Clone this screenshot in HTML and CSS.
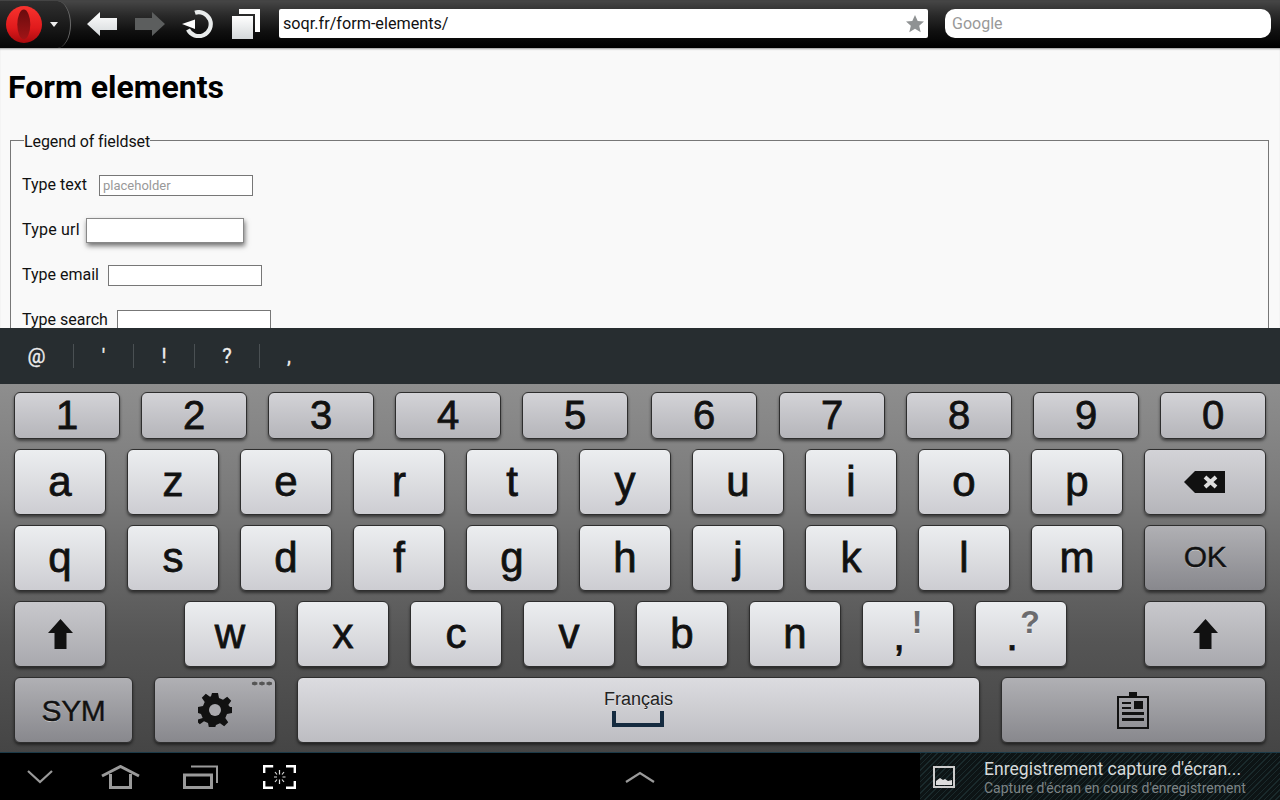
FILE: index.html
```html
<!DOCTYPE html>
<html lang="fr">
<head>
<meta charset="utf-8">
<title>Form elements</title>
<link rel="stylesheet" href="styles.css">
</head>
<body>
<div class="app">
  <header class="toolbar">
    <div class="menu">
      <svg class="opera" viewBox="0 0 36 37"><defs><linearGradient id="og" x1="0" y1="0" x2="0" y2="1"><stop offset="0" stop-color="#f8332e"/><stop offset=".6" stop-color="#e01a1c"/><stop offset="1" stop-color="#a80a0e"/></linearGradient><linearGradient id="oh" x1="0" y1="0" x2="0" y2="1"><stop offset="0" stop-color="#6a0c0e"/><stop offset="1" stop-color="#a01416"/></linearGradient></defs><ellipse cx="18" cy="18.500" rx="18" ry="18.500" fill="url(#og)"/><ellipse cx="17.800" cy="18.500" rx="6.500" ry="15" fill="url(#oh)"/></svg>
      <svg class="caret" viewBox="0 0 8 5"><path d="M0 0h8L4 5z" fill="#eee"/></svg>
    </div>
    <svg class="tool t-back" viewBox="0 0 30 24"><defs><linearGradient id="wg" x1="0" y1="0" x2="0" y2="1"><stop offset="0" stop-color="#fff"/><stop offset="1" stop-color="#d4d8da"/></linearGradient></defs><path d="M0 12 13 0v6h17v12H13v6z" fill="url(#wg)"/></svg>
    <svg class="tool t-fwd" viewBox="0 0 30 24"><path d="M30 12 17 0v6H0v12h17v6z" fill="#5c5e5e"/></svg>
    <svg class="tool t-reload" viewBox="0 0 31 28"><path d="M13 2.700A12 12 0 1 1 6 19.500" fill="none" stroke="#e9ecec" stroke-width="4.200"/><path d="M0 14 13 9.500V19z" fill="#fff"/></svg>
    <svg class="tool t-tabs" viewBox="0 0 28 30"><path d="M7 0h21v23h-5V5H7z" fill="#fff"/><path d="M0 7h21v23H0z" fill="url(#wg)"/></svg>
    <div class="address"><span class="url-text">soqr.fr/form-elements/</span>
      <svg class="star" viewBox="0 0 20 20"><path d="M10 1l2.700 6 6.300.6-4.800 4.200 1.500 6.400L10 14.800 4.300 18.200l1.500-6.400L1 7.600 7.300 7z" fill="#8f9293"/></svg>
    </div>
    <div class="search">Google</div>
  </header>

  <main class="page">
    <h1>Form elements</h1>
    <fieldset>
      <legend>Legend of fieldset</legend>
      <p class="line l-text"><label>Type text</label><input class="field" placeholder="placeholder"></p>
      <p class="line l-url"><label>Type url</label><input class="field focus"></p>
      <p class="line l-email"><label>Type email</label><input class="field"></p>
      <p class="line l-search"><label>Type search</label><input class="field"></p>
    </fieldset>
  </main>

  <div class="suggest">
    <span class="s s1">@</span><span class="s s2">'</span><span class="s s3">!</span><span class="s s4">?</span><span class="s s5">,</span>
  </div>

  <section class="keyboard">
    <div class="row nums">
      <div class="key gray">1</div><div class="key gray">2</div><div class="key gray">3</div><div class="key gray">4</div><div class="key gray">5</div><div class="key gray n6">6</div><div class="key gray n7">7</div><div class="key gray">8</div><div class="key gray">9</div><div class="key gray">0</div>
    </div>
    <div class="row">
      <div class="key">a</div><div class="key">z</div><div class="key">e</div><div class="key">r</div><div class="key">t</div><div class="key">y</div><div class="key">u</div><div class="key">i</div><div class="key">o</div><div class="key">p</div>
      <div class="key wide gray"><svg class="ico-del" viewBox="0 0 41 22"><path d="M0 11 11 0h30v22H11z" fill="#111"/><path d="M21 6l11 10M32 6 21 16" stroke="#ddd" stroke-width="4"/></svg></div>
    </div>
    <div class="row">
      <div class="key">q</div><div class="key">s</div><div class="key">d</div><div class="key">f</div><div class="key">g</div><div class="key">h</div><div class="key">j</div><div class="key">k</div><div class="key">l</div><div class="key">m</div>
      <div class="key wide dark small ok">OK</div>
    </div>
    <div class="row">
      <div class="key gray2"><svg class="ico-shift" viewBox="0 0 25 30"><path d="M12.500 0 25 14h-6.500v16h-12V14H0z" fill="#111"/></svg></div>
      <div class="key k-w">w</div><div class="key">x</div><div class="key">c</div><div class="key">v</div><div class="key">b</div><div class="key">n</div>
      <div class="key pair"><span class="main">,</span><span class="alt">!</span></div>
      <div class="key pair"><span class="main">.</span><span class="alt">?</span></div>
      <div class="key wide gray2 k-rshift"><svg class="ico-shift" viewBox="0 0 25 30"><path d="M12.500 0 25 14h-6.500v16h-12V14H0z" fill="#111"/></svg></div>
    </div>
    <div class="row">
      <div class="key sym dark small">SYM</div>
      <div class="key gear dark"><span class="dots"></span><svg class="ico-gear" viewBox="0 0 34 34"><path d="M14 0h6l1 5 4 1.700 4.200-2.900 4 4-2.900 4.200L32 14l2 0v6l-5 1-1.700 4 2.900 4.200-4 4-4.200-2.900-4 1.700-1 3h-6l-1-5-4-1.700-4.200 2.900-4-4L4.700 25 3 21l-3-1v-6l5-1 1.700-4L3.800 4.800l4-4L12 3.700l1-.4z" fill="#111"/><circle cx="17" cy="17" r="6" fill="#a9a8ad"/></svg></div>
      <div class="key space"><span class="lang">Français</span><span class="bar"></span></div>
      <div class="key clip dark"><svg class="ico-clip" viewBox="0 0 32 37"><path d="M1 5h30v31H1z" fill="none" stroke="#111" stroke-width="2"/><path d="M12 0h8v6h-8zM17 9h9v8h-9zM5 10h9v2H5zM5 15h9v2H5zM5 20h22v3H5zM5 26h22v3H5z" fill="#111"/></svg></div>
    </div>
  </section>

  <footer class="navbar">
    <svg class="nav nav-down" viewBox="0 0 26 14"><path d="M1 1l12 11L25 1" fill="none" stroke="#9a9a9a" stroke-width="2.200"/></svg>
    <svg class="nav nav-home" viewBox="0 0 39 24"><path d="M1 11 19.500 1.500 38 11M9.500 9v13.500h20V9" fill="none" stroke="#9a9a9a" stroke-width="3"/></svg>
    <svg class="nav nav-recent" viewBox="0 0 35 24"><path d="M1.500 10h27v12.500h-27z" fill="none" stroke="#9a9a9a" stroke-width="3"/><path d="M8 1.500h26V18" fill="none" stroke="#9a9a9a" stroke-width="2"/></svg>
    <svg class="nav nav-shot" viewBox="0 0 33 24"><path d="M1.200 8V1.200h9M23 1.200h8.800V8M31.800 16v6.800H23M10 22.800H1.200V16" fill="none" stroke="#fff" stroke-width="2.400"/><path d="M16.500 5v4.500M16.500 14.500V19M11 12h3M19.500 12h3M12 7l2 2.500M21 7l-2 2.500M12 17l2-2.500M21 17l-2-2.500" stroke="#ddd" stroke-width="1.200"/></svg>
    <svg class="nav nav-up" viewBox="0 0 30 12"><path d="M1 11 15 2l14 9" fill="none" stroke="#9a9a9a" stroke-width="2.200"/></svg>
    <div class="notice">
      <svg class="pic" viewBox="0 0 22 22"><path d="M1 1h20v20H1z" fill="none" stroke="#ccc" stroke-width="2"/><path d="M3 19v-4l4-3 3 2 2-1 3 2 4-1v5z" fill="#ddd"/></svg>
      <div class="notice-text">
        <div class="n-title">Enregistrement capture d'écran...</div>
        <div class="n-sub">Capture d'écran en cours d'enregistrement</div>
      </div>
    </div>
  </footer>
</div>
</body>
</html>
```
FILE: styles.css
```css
* { box-sizing: border-box; }
html, body { margin: 0; padding: 0; }
body { width: 1280px; height: 800px; overflow: hidden; background: #000; font-family: "Liberation Sans", Arial, sans-serif; }
.app { width: 1280px; height: 800px; display: flex; flex-direction: column; overflow: hidden; }

/* toolbar */
.toolbar { height: 48px; flex: none; display: flex; align-items: center; background: linear-gradient(#464646 0, #2a2a2a 30%, #101010 65%, #000 100%); border-top: 1px solid #444; }
.menu { width: 71px; height: 47px; flex: none; display: flex; align-items: center; gap: 8px; padding-left: 6px; border-right: 1px solid #6a6a6a; border-radius: 0 14px 14px 0 / 0 24px 24px 0; background: linear-gradient(#303030, #060606); }
.opera { width: 36px; height: 37px; flex: none; }
.caret { width: 8px; height: 5px; flex: none; }
.tool { flex: none; margin-bottom: 2px; }
.t-back { width: 30px; height: 24px; margin-left: 16px; }
.t-fwd { width: 30px; height: 24px; margin-left: 18px; }
.t-reload { width: 31px; height: 28px; margin-left: 17px; }
.t-tabs { width: 28px; height: 30px; margin-left: 19px; }
.address { flex: none; margin: 0 0 2px 19px; width: 649px; height: 29px; background: #fff; border-radius: 2px; display: flex; align-items: center; justify-content: space-between; padding: 0 3px 0 4px; font: 16.200px Roboto, sans-serif; color: #111; }
.star { width: 20px; height: 20px; }
.search { flex: none; margin: 0 0 2px 17px; width: 326px; height: 29px; background: #fff; border-radius: 10px; padding-left: 7px; font: 16px/29px Roboto, sans-serif; color: #999; }

/* page */
.page { height: 280px; flex: none; overflow: hidden; background: #f9f9f9; padding: 0 10px; font-family: Roboto, sans-serif; color: #111; box-shadow: inset 0 2px 2px -1px #999; }
h1 { margin: 21px 0 0 -2px; font-size: 32px; line-height: 36px; font-weight: 700; color: #000; }
fieldset { margin: 23px 1px 0 0; padding: 0 11px; border: 1px solid #777; height: 300px; min-width: 0; }
legend { padding: 4px 0 0; margin-left: 2px; font-size: 16px; line-height: 20px; letter-spacing: -.1px; }
.line { display: flex; align-items: center; margin: 0 0 24px; font-size: 16px; height: 21px; }
.line label { flex: none; padding-bottom: 2px; }
.l-text { margin-top: 23px; }
.l-text label { width: 77px; }
.l-url label { width: 64px; letter-spacing: .2px; }
.l-email label { width: 86px; }
.l-search label { width: 95px; }
.field { width: 154px; height: 21px; border: 1px solid #777; background: #fff; padding: 0 3px; font: 13px Roboto, sans-serif; }
.field::placeholder { color: #999; }
.field.focus { width: 158px; height: 25px; border-color: #888; box-shadow: 1px 3px 5px rgba(0,0,0,.55); }

/* suggestions */
.suggest { height: 56px; flex: none; background: #272d30; display: flex; align-items: center; color: #eee; font: 20px Roboto, sans-serif; -webkit-text-stroke: .3px #eee; }
.s { display: flex; align-items: center; justify-content: center; height: 24px; border-right: 1px solid #4a5053; width: 60px; }
.s1 { width: 74px; }
.s3 { width: 61px; }
.s4 { width: 65px; }
.s5 { border: 0; margin-left: -1px; }

/* keyboard */
.keyboard { height: 369px; flex: none; padding: 8px 14px 0; background: linear-gradient(#8e8e8e 0, #7a7a7a 30%, #555 70%, #454545 100%); display: flex; flex-direction: column; gap: 10px; border-bottom: 1px solid #1c3a48; }
.row { display: flex; gap: 21px; height: 66px; flex: none; }
.key { width: 92px; height: 66px; flex: none; display: flex; align-items: center; justify-content: center; border-radius: 6px; border: 1px solid #2e2e2e; background: linear-gradient(#eceef0, #cdcdd2); color: #111; font-size: 42px; -webkit-text-stroke: .8px #111; text-shadow: 0 1px 0 rgba(255,255,255,.5); box-shadow: 0 2px 3px rgba(0,0,0,.5); }
.row.nums { height: 47px; }
.nums .key { width: 106px; height: 47px; font-size: 40px; }
.key.n6 { margin-left: 2px; }
.key.n7 { margin-left: 1px; }
.key.gray { background: linear-gradient(#d3d3d7, #b5b5ba); }
.key.gray2 { background: linear-gradient(#c8c8cc, #a9a9ae); }
.key.dark { background: linear-gradient(#b0b0b4, #88888d); }
.key.wide { width: 122px; }
.key.small { font-size: 30px; -webkit-text-stroke: .4px #111; letter-spacing: -.3px; }
.key.ok { padding-bottom: 2px; }
.key.k-w { margin-left: 57px; }
.key.k-rshift { margin-left: 56px; }
.key.sym { width: 119px; padding-top: 2px; }
.key.gear { width: 122px; position: relative; }
.key.space { width: 683px; flex-direction: column; justify-content: flex-start; padding-top: 11px; background: linear-gradient(#dcdce0, #bdbdc2); }
.key.clip { width: 265px; }
.lang { font-size: 18px; line-height: 20px; color: #222; -webkit-text-stroke: 0; }
.bar { width: 52px; height: 16px; margin: 2px 1px 0 0; border: 4px solid #152b40; border-top: 0; }
.ico-del { width: 41px; height: 22px; margin-right: 2px; }
.ico-shift { width: 25px; height: 30px; }
.ico-gear { width: 34px; height: 34px; }
.ico-clip { width: 32px; height: 37px; margin-right: 1px; }
.dots { position: absolute; top: 3px; right: 2px; width: 22px; height: 5px; background: radial-gradient(ellipse at center, #555 2.500px, transparent 3.200px) 0 0 / 7.300px 5px; }
.pair { position: relative; }
.pair .main { position: relative; left: -9px; top: 2px; }
.pair .alt { position: absolute; top: 2px; left: 44px; width: 20px; text-align: center; font-size: 32px; font-weight: 700; color: #6b6b6e; -webkit-text-stroke: 0; }

/* nav bar */
.navbar { flex: 1; background: #000; position: relative; display: flex; align-items: center; }
.nav { flex: none; }
.nav-down { width: 26px; height: 14px; margin-left: 27px; }
.nav-home { width: 39px; height: 24px; margin-left: 48px; }
.nav-recent { width: 35px; height: 24px; margin-left: 43px; }
.nav-shot { width: 33px; height: 24px; margin-left: 45px; }
.nav-up { width: 30px; height: 12px; margin-left: 329px; }
.notice { position: absolute; left: 920px; top: 0; right: 0; bottom: 0; display: flex; align-items: center; gap: 29px; padding-left: 13px; background: repeating-linear-gradient(135deg, #1a2a2c 0 1px, #0d1415 1px 4px); }
.pic { width: 22px; height: 22px; flex: none; }
.n-title { font: 17.600px/22px Roboto, sans-serif; color: #d6dadb; }
.n-sub { font: 14px/16px Roboto, sans-serif; color: #7d8486; }
```
